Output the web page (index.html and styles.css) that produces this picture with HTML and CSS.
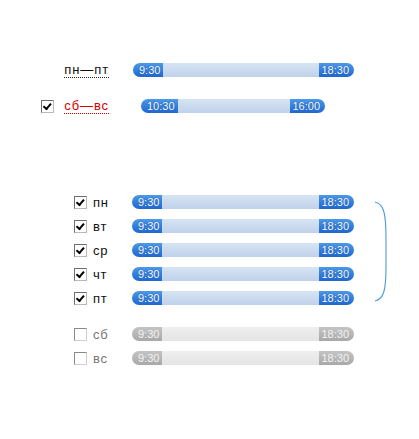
FILE: index.html
```html
<!DOCTYPE html>
<html>
<head>
<meta charset="utf-8">
<link rel="stylesheet" href="styles.css">
</head>
<body>
<div class="page">
  <section class="summary">
    <div class="srow">
      <div class="slabel"><span class="link">пн—пт</span></div>
      <div class="bar" style="width:221px">
        <span class="h hl">9:30</span><span class="track"></span><span class="h hr">18:30</span>
      </div>
    </div>
    <div class="srow">
      <div class="slabel"><span class="cb on"></span><span class="link red">сб—вс</span></div>
      <div class="bar shift" style="width:184px">
        <span class="h hl">10:30</span><span class="track"></span><span class="h hr">16:00</span>
      </div>
    </div>
  </section>

  <section class="days">
    <div class="group">
      <div class="drow"><span class="cb on"></span><span class="day">пн</span><div class="bar wide"><span class="h hl">9:30</span><span class="track"></span><span class="h hr">18:30</span></div></div>
      <div class="drow"><span class="cb on"></span><span class="day">вт</span><div class="bar wide"><span class="h hl">9:30</span><span class="track"></span><span class="h hr">18:30</span></div></div>
      <div class="drow"><span class="cb on"></span><span class="day">ср</span><div class="bar wide"><span class="h hl">9:30</span><span class="track"></span><span class="h hr">18:30</span></div></div>
      <div class="drow"><span class="cb on"></span><span class="day">чт</span><div class="bar wide"><span class="h hl">9:30</span><span class="track"></span><span class="h hr">18:30</span></div></div>
      <div class="drow"><span class="cb on"></span><span class="day">пт</span><div class="bar wide"><span class="h hl">9:30</span><span class="track"></span><span class="h hr">18:30</span></div></div>
      <svg class="bracket" width="20" height="104" viewBox="0 0 20 104">
        <path d="M3 2 C12 4 14 14 14 38 L14 66 C14 90 12 99 3 101" fill="none" stroke="#4c9bd6" stroke-width="1.1"/>
      </svg>
    </div>
    <div class="group off">
      <div class="drow"><span class="cb"></span><span class="day">сб</span><div class="bar wide grey"><span class="h hl">9:30</span><span class="track"></span><span class="h hr">18:30</span></div></div>
      <div class="drow"><span class="cb"></span><span class="day">вс</span><div class="bar wide grey"><span class="h hl">9:30</span><span class="track"></span><span class="h hr">18:30</span></div></div>
    </div>
  </section>
</div>
</body>
</html>
```

FILE: styles.css
```css
html, body {
  margin: 0;
  padding: 0;
  background: #fff;
}
body {
  font-family: "Liberation Sans", Arial, sans-serif;
  font-size: 13px;
  color: #111;
}
.page {
  padding-top: 52px;
}
.summary .srow {
  display: flex;
  align-items: center;
  height: 36px;
}
.slabel {
  width: 108px;
  display: flex;
  justify-content: flex-end;
  align-items: center;
  margin-right: 25px;
}
.link {
  border-bottom: 1px dotted #222;
  line-height: 14px;
  letter-spacing: 0.9px;
  margin-right: -1px;
}
.link.red {
  color: #d40000;
  border-bottom-color: #d40000;
}
.slabel .cb {
  margin-right: 10px;
}
.bar.shift {
  margin-left: 8px;
}

.cb {
  display: inline-block;
  box-sizing: border-box;
  width: 13px;
  height: 13px;
  border: 1px solid #6e6e6e;
  border-right-color: #b9b9b9;
  border-bottom-color: #b9b9b9;
  background: #fff;
  position: relative;
  flex: none;
}
.cb.on::after {
  content: "";
  position: absolute;
  left: 2px;
  top: 0px;
  width: 3px;
  height: 6px;
  border-right: 2px solid #000;
  border-bottom: 2px solid #000;
  transform: rotate(40deg) translate(1px, 0);
}
.off .cb {
  border-color: #8a8a8a #cfcfcf #cfcfcf #8a8a8a;
}

.bar {
  display: flex;
  height: 14px;
  flex: none;
}
.bar.wide {
  width: 222px;
}
.h {
  display: flex;
  align-items: center;
  justify-content: center;
  height: 14px;
  font-size: 11px;
  color: #fff;
  text-shadow: 0 0 1px #0b3e8c;
  background: linear-gradient(#4c99e8, #1e68cf);
  flex: none;
}
.hl {
  border-radius: 7px 0 0 7px;
  padding: 0 3px 0 6px;
}
.hr {
  border-radius: 0 7px 7px 0;
  padding: 0 5px 0 2px;
}
.track {
  flex: 1;
  background: linear-gradient(#d6e4f4, #bfd2ea);
}
.bar.grey .h {
  background: linear-gradient(#c4c4c4, #a8a8a8);
  text-shadow: none;
  color: #f4f4f4;
}
.bar.grey .track {
  background: linear-gradient(#efefef, #e4e4e4);
}

.days {
  margin-top: 66px;
}
.group {
  position: relative;
}
.group.off {
  margin-top: 12px;
}
.drow {
  display: flex;
  align-items: center;
  height: 24px;
  padding-left: 74px;
}
.day {
  width: 45px;
  padding-left: 6px;
  box-sizing: border-box;
  flex: none;
  letter-spacing: 0.8px;
}
.off .day {
  color: #777;
}
.bracket {
  position: absolute;
  left: 372px;
  top: 10px;
}
```
